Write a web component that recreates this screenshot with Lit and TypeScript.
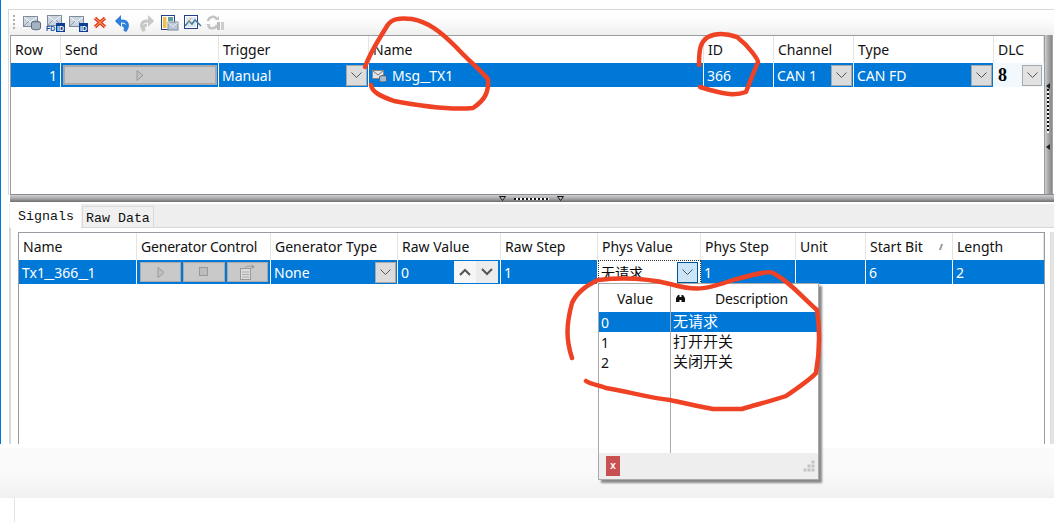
import { LitElement, html, css, svg } from "lit";
import { customElement } from "lit/decorators.js";

const chev = html`<svg class="chev" width="11" height="6" viewBox="0 0 11 6"><path d="M.5.5 5.5 5.5 10.5.5" fill="none" stroke="#555"/></svg>`;
const combo = (cls = "") => html`<span class="combo ${cls}">${chev}</span>`;
const play = html`<svg width="8" height="11" viewBox="0 0 8 11"><path d="M1 .5 7 5.5 1 10.5Z" fill="#c0c0c0" stroke="#999"/></svg>`;
const us = html`<span class="us">_</span>`;
const tri = html`<svg width="7" height="5" viewBox="0 0 7 5"><path d="M.5.5h6L3.500 4.500Z" fill="#bbb" stroke="#111"/></svg>`;

const env = svg`<rect x=".5" y="2.5" width="14" height="10" fill="#c9d4de" stroke="#7d8b99"/><path d="M1 3l6.500 5L14 3" fill="none" stroke="#f4f7fa"/><path d="M1 12l5-5M14 12 9 7" stroke="#8e9cab" fill="none"/>`;
const icons = [
  svg`${env}<ellipse cx="13" cy="9" rx="4.500" ry="1.800" fill="#8da0b2" stroke="#5e6a76"/><path d="M8.500 9v5c0 2.400 9 2.400 9 0V9" fill="#a3b3c2" stroke="#5e6a76"/>`,
  svg`<g transform="translate(1 -1)">${env}</g><text x="0" y="17" class="t" fill="#0e4da4">FD</text><rect x="10" y="9" width="9" height="9" fill="#0e3f94"/><text x="11" y="16.500" class="t" fill="#fff">ID</text>`,
  svg`${env}<rect x="10" y="9" width="9" height="9" fill="#0e3f94"/><text x="11" y="16.500" class="t" fill="#fff">ID</text>`,
  svg`<path d="M4 4l10 9M14 4 4 13" stroke="#e33c12" stroke-width="3.500" fill="none"/><path d="M4 4l10 9M14 4 4 13" stroke="#ffb38f" stroke-width="1" fill="none"/>`,
  svg`<path d="M2 7h6c6 0 7 5 3 10 1-4 0-6-3-6" fill="none" stroke="#2f7fdc" stroke-width="3"/><path d="M7 1 1 7l6 6Z" fill="#2f7fdc"/>`,
  svg`<path d="M16 7h-6c-6 0-7 5-3 10-1-4 0-6 3-6" fill="none" stroke="#c8c8c8" stroke-width="3"/><path d="M11 1l6 6-6 6Z" fill="#c8c8c8"/>`,
  svg`<rect x="1.500" y="1.500" width="13" height="14" fill="#fff" stroke="#27408b"/><rect x="3" y="3" width="3.500" height="11" fill="#f0c040"/><rect x="8" y="3" width="5" height="4" fill="#5f9ea0"/><rect x="8" y="8" width="10" height="8" fill="#b9c8d8" stroke="#7d8b99"/><path d="M8 8.500l5 4 5-4" fill="none" stroke="#eef"/>`,
  svg`<rect x="1.500" y="1.500" width="13" height="13" fill="#fff" stroke="#27408b"/><rect x="3" y="3" width="10" height="10" fill="#dbe7f3"/><path d="M2 12 6 7l3 3 3-4 6 6" fill="none" stroke="#4a7a9c" stroke-width="1.500"/><path d="M5 9l3-5" stroke="#d9a441"/>`,
  svg`<path d="M3 7a5 5 0 0 1 9-2M12 11a5 5 0 0 1-9 1" fill="none" stroke="#c4c4c4" stroke-width="2.500"/><path d="M10 6h4V2ZM1 10h4v4Z" fill="#c4c4c4"/><rect x="12" y="8" width="3" height="8" fill="#bbb"/><rect x="16" y="8" width="3" height="8" fill="#ccc"/>`,
];

const stroke1 = "M365 67 C371 50 380 38 387 26 C392 18 400 18 412 19 C428 22 440 31 456 47 C468 60 478 68 488 79 C489 92 485 100 473 108 C450 110 420 106 394 101 C380 96 372 92 371 85";
const stroke2 = "M699 65 C699 50 700 42 708 37 C716 33 725 33 737 37 C750 47 758 60 758 62 C754 72 752 76 746 92 C735 96 725 94 710 90 L700 87";
const stroke3 = "M572 358 C566 340 566 325 572 303 C578 290 590 284 598 280 C625 277 650 279 670 284 C695 291 705 290 733 280 C752 275 770 270 773 273 C790 282 800 295 817 310 C820 330 820 350 816 373 C810 380 800 386 786 396 C775 400 755 405 742 409 L713 409 C690 405 680 402 670 400 C650 398 630 392 606 388 C598 385 590 384 586 381";

@customElement("app-root")
export class AppRoot extends LitElement {
  static styles = css`
    :host { display: block; width: 1054px; height: 522px; position: relative; overflow: hidden; background: #fff;
      font: 14px "Noto Sans", "Noto Sans CJK SC", sans-serif; color: #111; }
    .frame { height: 444px; overflow: hidden; box-sizing: border-box; border-left: 1px solid #0078d7; padding-top: 9px; display: flex; flex-direction: column; }
    .top { margin-left: 7px; border-top: 1px solid #d8d8d8; border-left: 1px solid #d8d8d8; display: flex; flex-direction: column; height: 186px; flex: none; box-sizing: border-box; }
    .toolbar { height: 25px; flex: none; display: flex; align-items: center; padding-left: 4px; background: linear-gradient(#fff, #fdfdfd 40%, #efefef); }
    .grip { width: 2px; height: 16px; margin-right: 8px; background: repeating-linear-gradient(#b0b0b0 0 2px, transparent 2px 4px); }
    .tb { width: 19px; height: 18px; margin-right: 3.800px; flex: none; display: block; }
    .tb .t { font: bold 7px "Liberation Sans", sans-serif; }
    .topbody { flex: 1; display: flex; margin-left: 1px; min-height: 0; }
    .table { box-sizing: border-box; border: 1px solid #9a9aa2; display: grid; align-content: start; background: #fff; }
    .t1 { width: 1035px; grid-template-columns: 50px 158px 150px 335px 70px 80px 140px 50px; grid-template-rows: 27px 24px; }
    .t2 { width: 1027px; height: 230px; flex: none; border-bottom: none; grid-template-columns: 118px 134px 127px 103px 97px 103px 95px 70px 87px 91px; grid-template-rows: 27px 24px; }
    .strip { width: 8px; flex: none; border-bottom: 1px solid #9a9aa2; box-sizing: border-box; background: linear-gradient(90deg, #cfcfcf, #a8a8a8 40%, #8a8a8a 85%, #b4b4b4); display: flex; flex-direction: column; align-items: flex-start; padding-top: 48px; }
    .strip .arr { width: 0; height: 0; margin-left: 1px; flex: none; border: 3px solid transparent; border-right: 4px solid #222; border-left: none; }
    .strip .dots { width: 2px; height: 44px; margin: 0 0 11px 2px; flex: none; background: repeating-linear-gradient(#111 0 2px, #fff 2px 4px); }
    .h { border-right: 1px solid #e4e4e4; padding: 0 4px; display: flex; align-items: center; white-space: nowrap; position: relative; }
    .c { background: #0078d7; color: #fff; border-right: 1px solid #fff; padding: 0 1px 0 3px; display: flex; align-items: center; justify-content: space-between; white-space: nowrap; position: relative; box-sizing: border-box; }
    .c:last-child, .h:last-child { border-right: none; }
    .us { display: inline-block; margin: 0 1.500px; transform: scaleX(1.6); }
    .tight { letter-spacing: -.2px; }
    .num { justify-content: flex-end; padding-right: 3px; }
    .combo { width: 21px; height: 21px; box-sizing: border-box; background: #dcdcdc; border: 1px solid #a8a8a8; display: flex; align-items: center; justify-content: center; flex: none; }
    .combo.hot { background: #cce4f7; border-color: #005499; }
    .gb { height: 20px; background: #c9c9c9; border: 1px solid #a9a9a9; box-sizing: border-box; display: flex; align-items: center; justify-content: center; }
    .send { width: 154px; flex: none; margin-left: -1px; border-width: 2px; }
    .gens { gap: 2px; padding: 0 2px 0 3px; }
    .gens .gb { flex: 1; }
    .name { justify-content: flex-start; gap: 5px; }
    .dlc { background: #f1f8fe; color: #000; font: bold 18px "Liberation Serif", serif; padding: 0 2px 0 4px; }
    .dlc .combo { width: 20px; background: #e2e2e2; }
    .raw { padding-right: 2px; }
    .spin { display: flex; height: 22px; background: #ececec; }
    .spin span { width: 22px; display: flex; align-items: center; justify-content: center; }
    .spin span:first-child { background: #f6f6f6; }
    .phys { background: #fff; color: #000; outline: 1px dotted #333; outline-offset: -1px; padding-right: 2px; }
    .bottom { flex: 1; display: flex; flex-direction: column; min-height: 0; }
    .split { height: 8px; margin: -1px 0 0 9px; flex: none; box-sizing: border-box; border-top: 1px solid #8a8a94; background: linear-gradient(#d0d0d0, #a8a8a8 50%, #6e6e6e); display: flex; align-items: center; justify-content: center; gap: 8px; padding-right: 2px; }
    .sd { width: 35px; height: 2px; background: repeating-linear-gradient(90deg, #111 0 2px, #fff 2px 4px); }
    .pane { flex: 1; margin-left: 8px; display: flex; flex-direction: column; min-height: 0; padding-top: 2px; }
    .tabs { height: 23px; flex: none; display: flex; align-items: flex-end; background: #eee; border-bottom: 1px solid #d8d8d8; padding-left: 1px; font: 13.300px "Liberation Mono", monospace; }
    .tab { box-sizing: border-box; width: 71px; background: #fff; height: 24px; margin-bottom: -1px; padding: 5px 0 0 8px; }
    .tab.off { width: 72px; height: 21px; background: #f0f0f0; border: 1px solid #d9d9d9; border-bottom: none; padding: 4px 0 0 3px; margin-bottom: 0; margin-left: 1px; }
    .panebody { flex: 1; border-left: 2px solid #d8d8d8; padding: 4px 0 0 7px; display: flex; min-height: 0; }
    .rstrip { flex: 1; margin-left: 5px; border-left: 1px solid #ddd; background: #e4e4e4; }
    .band { height: 50px; margin-top: 4px; background: linear-gradient(#fafafa 50%, #f0f0f0); }
    .foot { height: 24px; margin-left: 14px; border-left: 1px solid #e2e2e2; }
    .popup { position: absolute; left: 598px; top: 283px; width: 221px; height: 197px; box-sizing: border-box; background: #fff; border: 1px solid #a9a9a9; box-shadow: 3px 3px 2px #8a8a8a; display: flex; flex-direction: column; z-index: 2; }
    .pgrid { flex: 1; display: grid; grid-template-columns: 72px 1fr; grid-template-rows: 28px 20px 20px 20px 1fr; }
    .ph { display: flex; align-items: center; justify-content: center; padding-top: 1px; position: relative; }
    .pv { border-right: 1px solid #aaa; padding-left: 2px; display: flex; align-items: center; white-space: nowrap; color: #111; }
    .pd { padding-left: 2px; display: flex; align-items: center; font-size: 15px; line-height: 18px; padding-bottom: 2px; box-sizing: border-box; white-space: nowrap; color: #111; }
    .sel { background: #0078d7; color: #fff; }
    .ph.v { border-right: 1px solid #aaa; padding-left: 1px; }
    .ph.d { padding-left: 14px; letter-spacing: -.2px; }
    .bino { position: absolute; left: 4px; top: 10px; }
    .pfoot { height: 26px; flex: none; background: #eee; display: flex; align-items: center; justify-content: space-between; padding: 0 3px 0 7px; }
    .x { width: 14px; height: 20px; background: #c85050; color: #fff; font: bold 10px "Liberation Mono", monospace; display: flex; align-items: center; justify-content: center; }
    .marks { position: absolute; left: 0; top: 0; z-index: 3; pointer-events: none; }
    .sort { position: absolute; right: 10px; top: 11px; width: 2px; height: 6px; background: #999; transform: skewX(-20deg); }
  `;

  render() {
    return html`
      <div class="frame">
        <div class="top">
          <div class="toolbar">
            <span class="grip"></span>
            ${icons.map((i) => html`<svg class="tb" viewBox="0 0 19 18">${i}</svg>`)}
          </div>
          <div class="topbody">
            <div class="table t1">
              ${["Row", "Send", "Trigger", "Name", "ID", "Channel", "Type", "DLC"].map((h) => html`<div class="h">${h}</div>`)}
              <div class="c num">1</div>
              <div class="c"><span class="gb send">${play}</span></div>
              <div class="c">Manual ${combo()}</div>
              <div class="c name">
                <svg width="15" height="13" viewBox="0 0 15 13"><rect x=".5" y="1.500" width="11" height="8" fill="#dfe6ee" stroke="#888"/><path d="M1 2l5 4 5-4" fill="none" stroke="#777"/><ellipse cx="11" cy="8" rx="3.500" ry="1.500" fill="#9fb2c6" stroke="#56616d"/><path d="M7.500 8v3.500c0 2 7 2 7 0V8" fill="#a9bccf" stroke="#56616d"/></svg>
                <span>Msg${us}TX1</span>
              </div>
              <div class="c">366</div>
              <div class="c">CAN 1 ${combo()}</div>
              <div class="c">CAN FD ${combo()}</div>
              <div class="c dlc">8 ${combo()}</div>
            </div>
            <div class="strip"><span class="arr"></span><span class="dots"></span><span class="arr"></span></div>
          </div>
        </div>
        <div class="bottom">
          <div class="split">${tri}<span class="sd"></span>${tri}</div>
          <div class="pane">
            <div class="tabs"><div class="tab">Signals</div><div class="tab off">Raw Data</div></div>
            <div class="panebody">
              <div class="table t2">
                <div class="h">Name</div>
                <div class="h tight">Generator Control</div>
                ${["Generator Type", "Raw Value", "Raw Step", "Phys Value", "Phys Step", "Unit"].map((h) => html`<div class="h">${h}</div>`)}
                <div class="h">Start Bit<span class="sort"></span></div>
                <div class="h">Length</div>
                <div class="c"><span>Tx1${us}366${us}1</span></div>
                <div class="c gens">
                  <span class="gb">${play}</span>
                  <span class="gb"><svg width="10" height="10" viewBox="0 0 10 10"><rect x=".5" y=".5" width="8" height="8" fill="#bdbdbd" stroke="#999"/></svg></span>
                  <span class="gb"><svg width="18" height="16" viewBox="0 0 18 16"><rect x="2.500" y="4.500" width="10" height="11" fill="#ddd" stroke="#999"/><path d="M4 8h7M4 10.500h7M4 13h7" stroke="#aaa"/><path d="M6 4c2-3 6-3 8-2l-1-2 4 3-4 2 1-2c-3-1-6 0-8 1Z" fill="#999"/></svg></span>
                </div>
                <div class="c">None ${combo()}</div>
                <div class="c raw">0
                  <span class="spin">
                    <span><svg width="12" height="8" viewBox="0 0 12 8"><path d="M1 7l5-5 5 5" fill="none" stroke="#555" stroke-width="2"/></svg></span>
                    <span><svg width="12" height="8" viewBox="0 0 12 8"><path d="M1 1l5 5 5-5" fill="none" stroke="#555" stroke-width="2"/></svg></span>
                  </span>
                </div>
                <div class="c">1</div>
                <div class="c phys">无请求 ${combo("hot")}</div>
                <div class="c">1</div>
                <div class="c"></div>
                <div class="c">6</div>
                <div class="c">2</div>
              </div>
              <div class="rstrip"></div>
            </div>
          </div>
        </div>
      </div>
      <div class="band"></div>
      <div class="foot"></div>

      <div class="popup">
        <div class="pgrid">
          <div class="ph v">Value</div>
          <div class="ph d">
            <svg class="bino" width="11" height="9" viewBox="0 0 11 9"><path d="M1 8V4l2-3h1.500v7ZM6.500 8V1H8l2 3v4ZM4.500 3h2v3h-2Z" fill="#111"/></svg>
            Description
          </div>
          <div class="pv sel">0</div><div class="pd sel">无请求</div>
          <div class="pv">1</div><div class="pd">打开开关</div>
          <div class="pv">2</div><div class="pd">关闭开关</div>
          <div class="pv"></div><div></div>
        </div>
        <div class="pfoot">
          <span class="x">x</span>
          <svg width="12" height="12" viewBox="0 0 12 12" fill="#c4c4c4"><rect x="8.500" y=".5" width="3" height="3"/><rect x="4.500" y="4.500" width="3" height="3"/><rect x="8.500" y="4.500" width="3" height="3"/><rect x=".5" y="8.500" width="3" height="3"/><rect x="4.500" y="8.500" width="3" height="3"/><rect x="8.500" y="8.500" width="3" height="3"/></svg>
        </div>
      </div>

      <svg class="marks" width="1054" height="522" fill="none" stroke="#ef4123" stroke-width="4.500" stroke-linecap="round" stroke-linejoin="round">
        <path d="${stroke1}"/><path d="${stroke2}"/><path d="${stroke3}"/>
      </svg>
    `;
  }
}
